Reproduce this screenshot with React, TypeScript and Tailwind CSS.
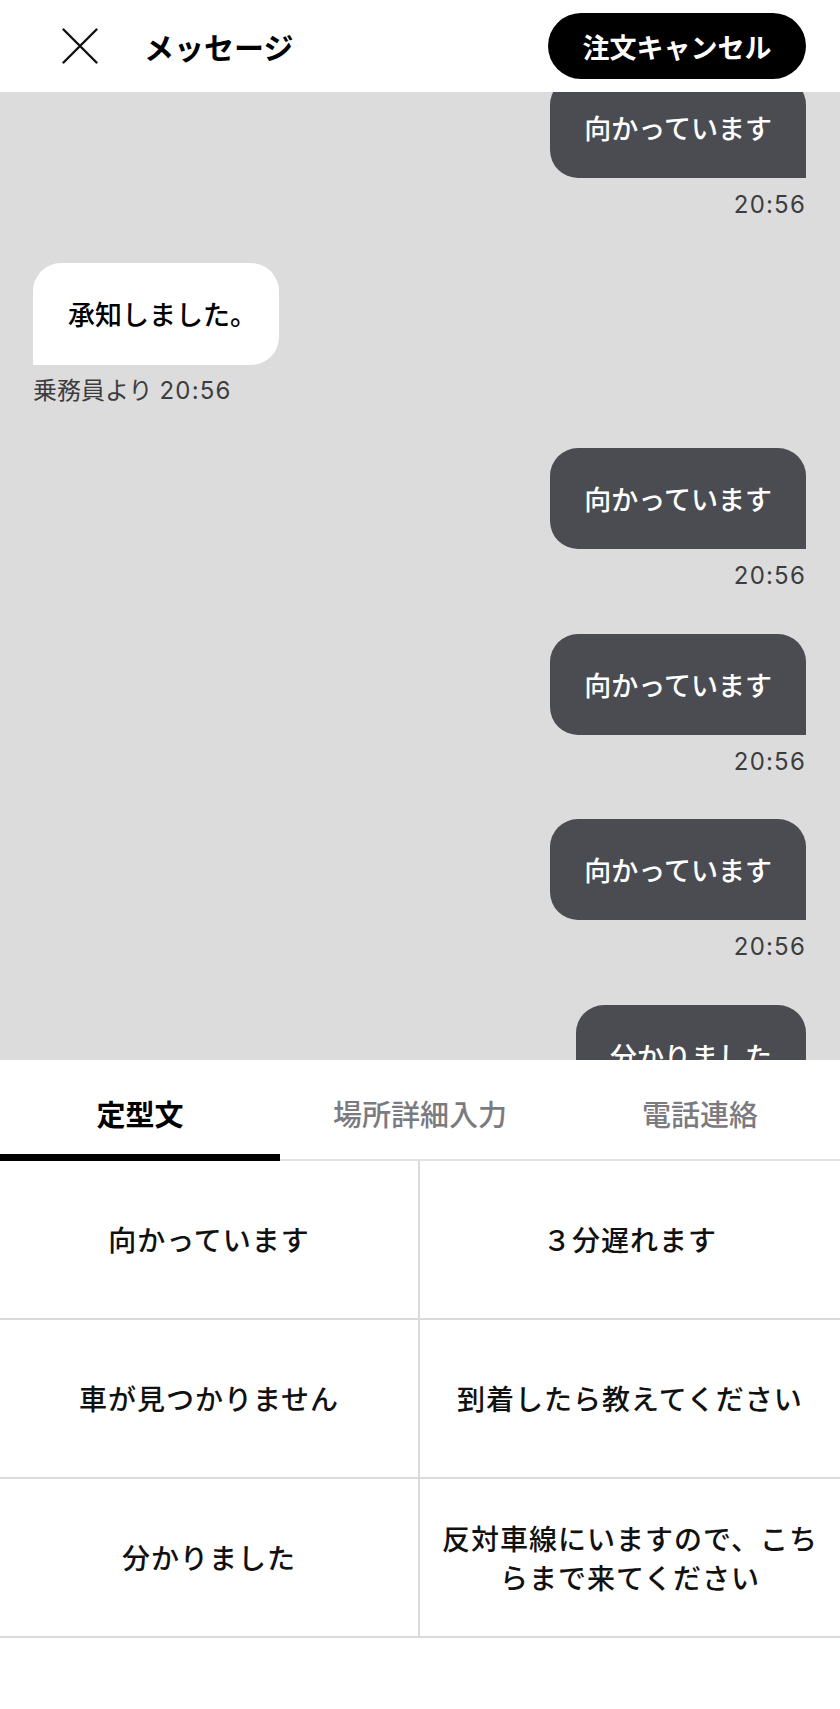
import React from "react";

type Msg = { side: "me" | "them"; text: string; meta: string; w?: string };

const messages: Msg[] = [
  { side: "me", text: "向かっています", meta: "20:56" },
  { side: "them", text: "承知しました。", meta: "乗務員より 20:56" },
  { side: "me", text: "向かっています", meta: "20:56" },
  { side: "me", text: "向かっています", meta: "20:56" },
  { side: "me", text: "向かっています", meta: "20:56" },
  { side: "me", text: "分かりました", meta: "20:56" },
];

const phrases: React.ReactNode[] = [
  "向かっています",
  "３分遅れます",
  "車が見つかりません",
  "到着したら教えてください",
  "分かりました",
  (
    <>
      反対車線にいますので、こち
      <br />
      らまで来てください
    </>
  ),
];

const tabs = ["定型文", "場所詳細入力", "電話連絡"];

function CloseIcon() {
  return (
    <svg width="36" height="36" viewBox="0 0 36 36" fill="none">
      <path d="M1.5 1.5 L34.5 34.5 M34.5 1.5 L1.5 34.5" stroke="#111" strokeWidth="2.4" strokeLinecap="round" />
    </svg>
  );
}

export default function App() {
  return (
    <div className="w-[840px] h-[1709px] bg-white overflow-hidden font-['Noto_Sans_CJK_JP',sans-serif] text-[#111]">
      {/* Header */}
      <header className="h-[92px] flex items-center pl-[62px] pr-[34px] bg-white relative z-10">
        <CloseIcon />
        <h1 className="ml-[46px] text-[30px] font-bold leading-none text-black">メッセージ</h1>
        <button className="ml-auto h-[66px] w-[258px] rounded-full bg-black text-white text-[27px] font-bold leading-none flex items-center justify-center">
          注文キャンセル
        </button>
      </header>

      {/* Chat */}
      <section className="h-[968px] bg-[#dcdcdc] overflow-hidden px-[34px]">
        <div className="mt-[-15px] flex flex-col gap-[42.5px]">
          {messages.map((m, i) =>
            m.side === "me" ? (
              <div key={i} className="flex flex-col items-end">
                <div className="h-[101px] px-[34px] bg-[#4a4c52] rounded-[28px] rounded-br-none flex items-center text-white text-[27px] font-medium leading-none">
                  {m.text}
                </div>
                <div className="mt-[12px] h-[30px] flex items-center text-[24px] tracking-[1.2px] text-[#3d3d40] font-['Inter','Noto_Sans_CJK_JP',sans-serif]">
                  {m.meta}
                </div>
              </div>
            ) : (
              <div key={i} className="flex flex-col items-start ml-[-1px]">
                <div className="h-[102px] pl-[35px] pr-[22px] bg-white rounded-[28px] rounded-bl-none flex items-center text-black text-[27px] font-medium leading-none">
                  {m.text}
                </div>
                <div className="mt-[11px] h-[30px] flex items-center text-[24px] text-[#3d3d40] font-['Inter','Noto_Sans_CJK_JP',sans-serif]">
                  <span>乗務員より</span>
                  <span className="ml-[7px] tracking-[1.2px]">20:56</span>
                </div>
              </div>
            )
          )}
        </div>
      </section>

      {/* Tabs */}
      <nav className="grid grid-cols-3 h-[101px] bg-white">
        {tabs.map((t, i) => (
          <div key={t} className="flex flex-col">
            <div
              className={
                "h-[94px] pt-[12px] flex items-center justify-center text-[29px] leading-none " +
                (i === 0 ? "font-bold text-black" : "font-medium text-[#7b7b7f]")
              }
            >
              {t}
            </div>
            <div className="h-[7px] flex flex-col justify-end">
              {i === 0 ? <div className="h-[7px] bg-black" /> : <div className="h-[2px] bg-[#e2e2e2]" />}
            </div>
          </div>
        ))}
      </nav>

      {/* Phrase grid */}
      <div className="grid grid-cols-2 bg-white">
        {phrases.map((p, i) => (
          <div
            key={i}
            className={
              "h-[159px] border-b-2 border-[#dadada] flex items-center justify-center text-center text-[28px] tracking-[1px] leading-[39px] font-medium text-[#111] " +
              (i % 2 === 0 ? "border-r-2" : "")
            }
          >
            <span>{p}</span>
          </div>
        ))}
      </div>
    </div>
  );
}
